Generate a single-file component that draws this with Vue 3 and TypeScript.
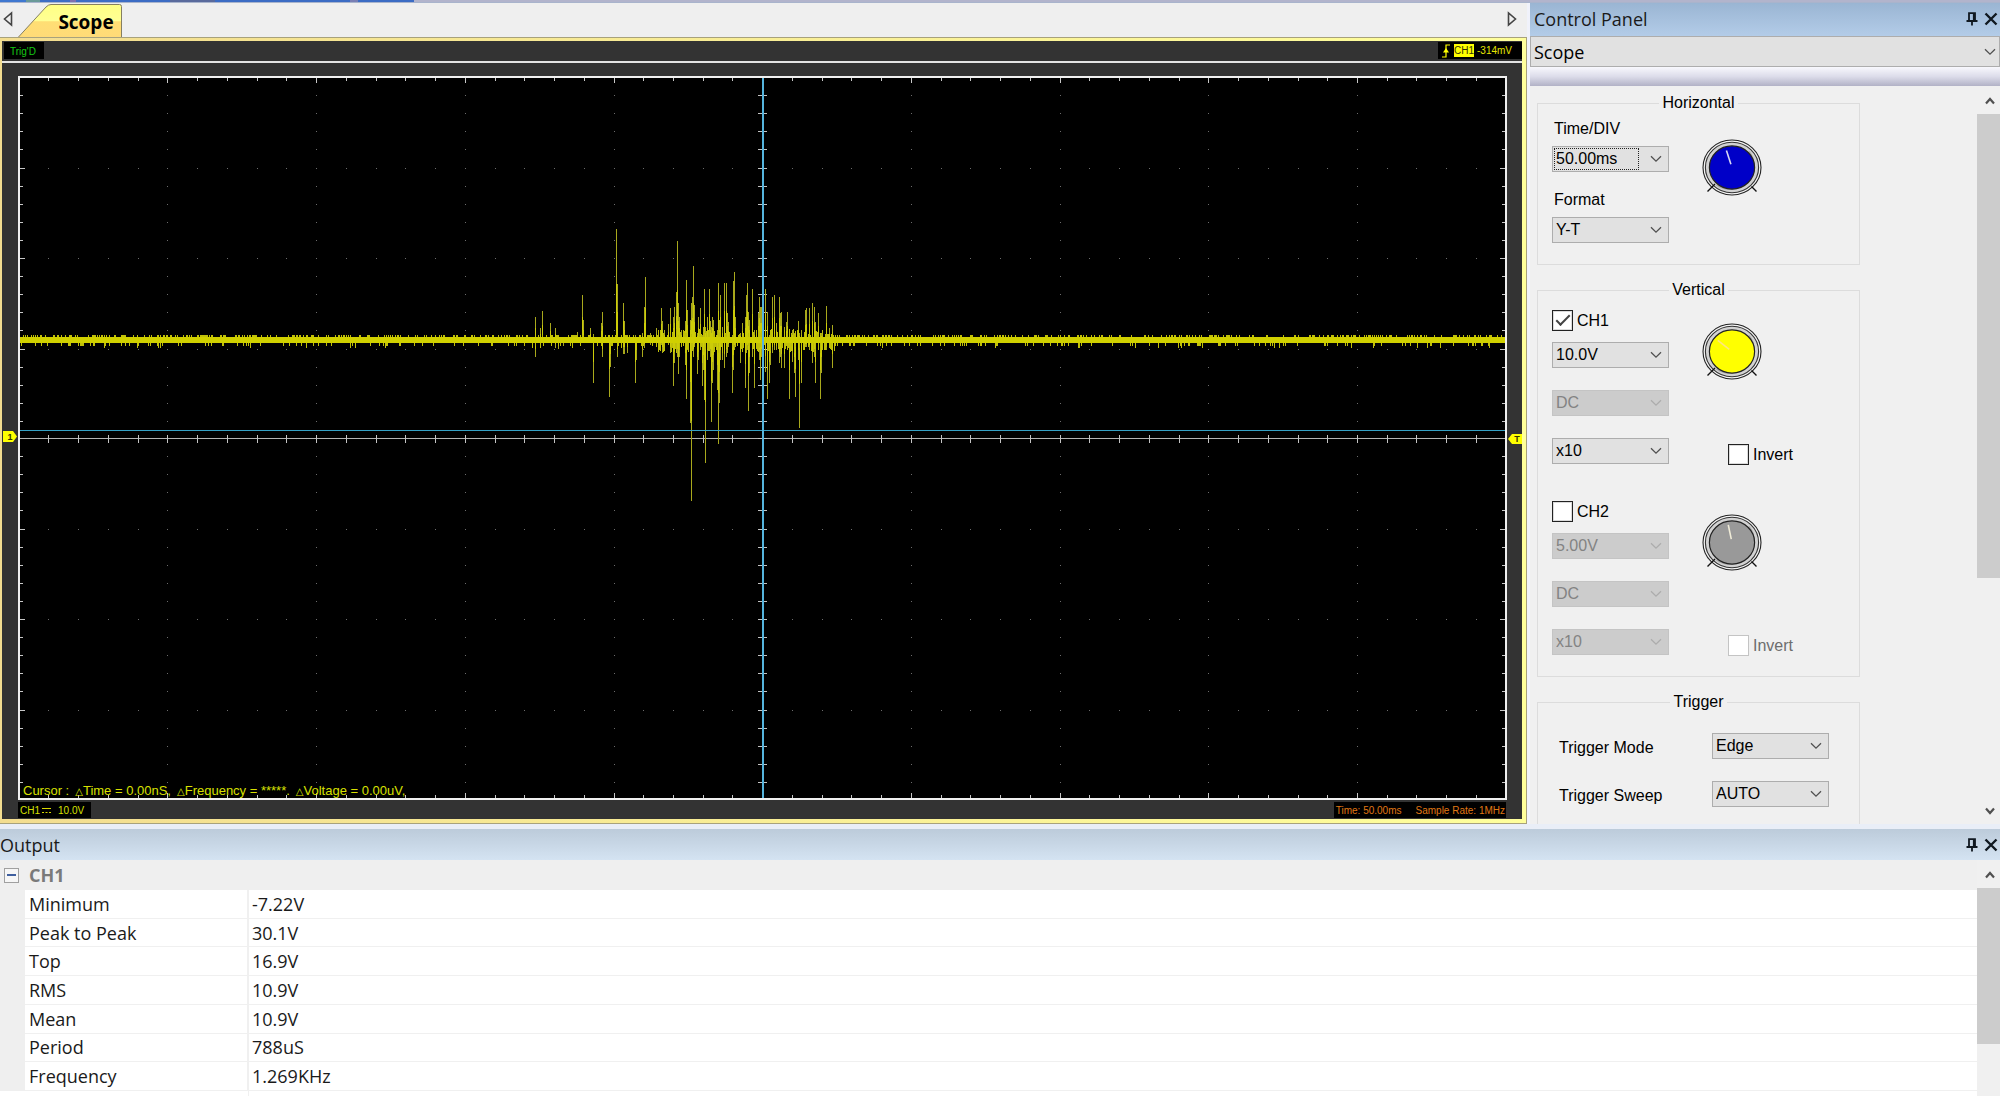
<script setup lang="ts">
import { h, ref } from 'vue'
import type { FunctionalComponent } from 'vue'

interface Channel {
  name: string
  enabled: boolean
  locked: boolean[]
  scale: string
  coupling: string
  probe: string
  invert: boolean
  color: string
  pointer: string
  angle: number
}

const timeDiv = ref('50.00ms')
const format = ref('Y-T')
const source = ref('Scope')

const channels = ref<Channel[]>([
  { name: 'CH1', enabled: true, locked: [false, true, false], scale: '10.0V', coupling: 'DC', probe: 'x10', invert: false, color: '#ffff00', pointer: '#ffe680', angle: -52 },
  { name: 'CH2', enabled: false, locked: [true, true, true], scale: '5.00V', coupling: 'DC', probe: 'x10', invert: false, color: '#999999', pointer: '#f0ecd8', angle: -12 },
])

const triggers = ref([
  { id: 'trigger-mode', label: 'Trigger Mode', value: 'Edge' },
  { id: 'trigger-sweep', label: 'Trigger Sweep', value: 'AUTO' },
])

const measurements = [
  ['Minimum', '-7.22V'],
  ['Peak to Peak', '30.1V'],
  ['Top', '16.9V'],
  ['RMS', '10.9V'],
  ['Mean', '10.9V'],
  ['Period', '788uS'],
  ['Frequency', '1.269KHz'],
]

const Chevron: FunctionalComponent = () =>
  h('svg', { width: 12, height: 8, viewBox: '0 0 12 8', 'aria-hidden': 'true' }, [
    h('path', { d: 'M1 1.2 6 6.2 11 1.2', fill: 'none', stroke: 'currentColor', 'stroke-width': 1.3 }),
  ])

const ScrollArrow: FunctionalComponent<{ down?: boolean }> = (props) =>
  h('svg', { width: 10, height: 8, viewBox: '0 0 10 8', 'aria-hidden': 'true' }, [
    h('path', { d: props.down ? 'M1 1.5 5 6 9 1.5' : 'M1 6.5 5 2 9 6.5', fill: 'none', stroke: '#505050', 'stroke-width': 2.2 }),
  ])
ScrollArrow.props = { down: Boolean }

const PinIcon: FunctionalComponent = () =>
  h('svg', { width: 12, height: 14, viewBox: '0 0 12 14', 'aria-hidden': 'true' }, [
    h('path', { d: 'M3 8.500V1.200h6v7.300M.5 9h11M6 9v4.500M7.800 1v8', fill: 'none', stroke: '#101820', 'stroke-width': 1.8 }),
  ])

const CloseIcon: FunctionalComponent = () =>
  h('svg', { width: 14, height: 14, viewBox: '0 0 14 14', 'aria-hidden': 'true' }, [
    h('path', { d: 'M1.5 1.5 12.5 12.5M12.5 1.5 1.5 12.5', fill: 'none', stroke: '#101820', 'stroke-width': 2.4 }),
  ])

const Knob: FunctionalComponent<{ color: string; pointer: string; angle: number }> = (props) =>
  h('svg', { width: 60, height: 60, viewBox: '0 0 60 60', 'aria-hidden': 'true' }, [
    h('ellipse', { cx: 30, cy: 29.5, rx: 29, ry: 27.5, fill: '#f4f4f4', stroke: '#222', 'stroke-width': 1.1 }),
    h('ellipse', { cx: 30, cy: 29.5, rx: 26.6, ry: 25.2, fill: '#d2d2d2', stroke: '#333', 'stroke-width': 1.1 }),
    h('path', { d: 'M47.5 13A24.6 24 0 0 1 14 47.5L18 43A20 20 0 0 0 43 18Z', fill: '#aaaaaa' }),
    h('ellipse', { cx: 30, cy: 29.5, rx: 22.6, ry: 21.6, fill: props.color, stroke: '#222', 'stroke-width': 1.2 }),
    h('path', { d: 'M13 46 5.5 53.5M49.5 48.5 54.5 53.5', stroke: '#111', 'stroke-width': 1.4 }),
    h('path', { d: 'M30 26V11.5', stroke: props.pointer, 'stroke-width': 1.6, transform: `rotate(${props.angle} 30 29.5)` }),
  ])
Knob.props = ['color', 'pointer', 'angle']

/* Graticule: ten divisions by eight, five steps in each */
const W = 1485
const H = 721
const gx = (i: number) => Math.round(-1.3 + i * 29.74)
const gy = (i: number) => Math.round(-1 + i * 18.1)

let dots = ''
let edges = ''
let axes = ''
for (let i = 1; i < 50; i++) {
  const x = gx(i)
  const len = i % 5 ? 3 : 5
  edges += `M${x} 0h1v${len}h-1zM${x} ${H - len}h1v${len}h-1z`
  axes += `M${x} 357h1v9h-1z`
  for (let j = 1; j < 8; j++) if (j !== 4) dots += `M${x} ${gy(j * 5)}h1v1h-1z`
}
for (let j = 1; j < 40; j++) {
  const y = gy(j)
  const len = j % 5 ? 3 : 5
  edges += `M0 ${y}v1h${len}v-1zM${W - len} ${y}v1h${len}v-1z`
  axes += `M738 ${y}v1h9v-1z`
  for (let i = 1; i < 10; i++) if (i !== 5) dots += `M${gx(i * 5)} ${y}h1v1h-1z`
}

/* Burst samples: position, rise above and fall below the base line, in thirds of a pixel */
const burst = [
  47, 68, 52, 60, 35, 0, 68, 87, 0, 91, 52, 10, 107, 35, 25, 116, 12, 28, 130, 10, 18, 172, 25, 10, 187, 135, 0, 190, 60, 10,
  211, 35, 10, 220, 18, 128, 243, 50, 10, 247, 85, 52, 269, 15, 172, 271, 10, 80, 288, 332, 10, 291, 168, 52, 311, 110, 42,
  314, 58, 42, 323, 15, 40, 347, 15, 128, 350, 8, 60, 368, 20, 52, 373, 98, 25, 376, 188, 10, 390, 22, 15, 409, 35, 12,
  424, 95, 15, 428, 58, 40, 432, 30, 30, 446, 48, 15, 452, 95, 38, 460, 70, 138, 463, 100, 70, 469, 145, 30, 472, 298, 50,
  475, 110, 102, 478, 70, 50, 483, 30, 15, 495, 58, 75, 499, 180, 178, 502, 90, 30, 512, 60, 248, 515, 110, 486,
  518, 128, 20, 521, 222, 50, 524, 105, 20, 533, 20, 102, 536, 68, 60, 541, 95, 30, 547, 15, 138, 551, 40, 90, 554, 152, 180,
  557, 40, 372, 562, 68, 60, 567, 152, 30, 570, 58, 50, 574, 40, 246, 577, 68, 130, 580, 60, 90, 592, 30, 150, 595, 172, 315,
  598, 60, 188, 602, 135, 60, 606, 40, 60, 614, 170, 85, 618, 172, 50, 621, 80, 40, 625, 55, 20, 636, 15, 160, 639, 50, 70,
  641, 178, 90, 644, 204, 30, 647, 68, 20, 662, 20, 68, 668, 52, 30, 676, 70, 145, 680, 135, 40, 683, 170, 30, 686, 85, 214,
  689, 60, 100, 696, 152, 50, 703, 30, 145, 715, 80, 20, 719, 128, 60, 722, 100, 120, 725, 100, 50, 731, 60, 60, 737, 152, 95,
  743, 85, 178, 748, 15, 128, 752, 15, 75, 757, 128, 40, 763, 135, 30, 768, 50, 30, 777, 128, 68, 781, 80, 50, 785, 85, 85,
  793, 38, 85, 798, 55, 15, 803, 85, 20, 808, 30, 178, 818, 30, 65, 822, 20, 100, 825, 20, 172, 836, 58, 60, 838, 20, 264,
  843, 30, 128, 857, 90, 20, 860, 95, 20, 868, 95, 30, 878, 110, 68, 884, 100, 50, 887, 55, 128, 896, 82, 30, 902, 20, 178,
  905, 20, 98, 918, 102, 30, 929, 35, 10, 937, 45, 85,
]
let spikes = ''
let cores = ''
for (let i = 0; i < burst.length; i += 3) {
  const x = 500 + Math.floor(burst[i] / 3)
  const rise = Math.round(burst[i + 1] / 3)
  const fall = Math.round(burst[i + 2] / 3)
  spikes += `M${x} ${262 - rise}h1V${262 + fall}h-1z`
  cores += `M${x} ${262 - Math.round(rise * 0.5)}h1V${262 + Math.round(fall * 0.5)}h-1z`
}

/* Base-line noise, thicker while the burst lasts */
let noise = ''
let seed = 7
const rand = () => {
  seed = (seed * 16807) % 2147483647
  return seed / 2147483647
}
for (let x = 1; x < W; x++) {
  const busy = x > 635 && x < 815
  const up = rand()
  const down = rand()
  if (busy) {
    if (up > 0.5) noise += `M${x} ${258 - Math.round((up - 0.5) * 14)}h1V262h-1z`
    if (down > 0.5) noise += `M${x} 262h1v${5 + Math.round((down - 0.5) * 16)}h-1z`
  } else {
    if (up > 0.7) noise += `M${x} 257h1v5h-1z`
    if (down > 0.84) noise += `M${x} 262h1v${down > 0.97 ? 8 : 6}h-1z`
  }
}
</script>

<template>
  <div class="app">
    <div class="strip"></div>

    <main class="scope">
      <div class="tabs">
        <button class="nav" type="button" aria-label="Previous tab">
          <svg width="10" height="16" viewBox="0 0 10 16"><path d="M8.5 2v12L1.5 8z" fill="none" stroke="#444" stroke-width="1.6" /></svg>
        </button>
        <button class="tab" type="button">
          <svg class="tab-shape" width="104" height="34" viewBox="0 0 104 34" aria-hidden="true">
            <defs>
              <linearGradient id="tab-fill" x1="0" y1="0" x2="0" y2="1">
                <stop offset="0" stop-color="#ffff84" />
                <stop offset=".5" stop-color="#ffff94" />
                <stop offset=".53" stop-color="#ffde74" />
                <stop offset="1" stop-color="#ffdb78" />
              </linearGradient>
            </defs>
            <path d="M.5 34 28 4Q30.500 1.500 33 1.500H101.500Q103.500 1.500 103.500 3.500V34" fill="url(#tab-fill)" stroke="#857f60" />
          </svg>
          <span class="tab-label">Scope</span>
        </button>
        <button class="nav nav-right" type="button" aria-label="Next tab">
          <svg width="10" height="16" viewBox="0 0 10 16"><path d="M1.500 2v12L8.500 8z" fill="none" stroke="#444" stroke-width="1.600" /></svg>
        </button>
      </div>

      <div class="frame">
        <div class="screen">
          <div class="status">
            <span class="trig">Trig'D</span>
            <span class="trigger-info">
              <svg width="10" height="14" viewBox="0 0 10 14" aria-hidden="true">
                <path d="M1 13h4V1h4" fill="none" stroke="#ffff00" stroke-width="1.200" />
                <path d="M5 4 8 8.500H2z" fill="#ffff00" />
              </svg>
              <b>CH1</b>
              <span>-314mV</span>
            </span>
          </div>

          <div class="plot-row">
            <svg class="marker marker-left" width="14" height="11" viewBox="0 0 14 11" aria-hidden="true">
              <path d="M0 0h10l4 5.500L10 11H0z" fill="#ffff00" />
              <text x="7" y="9">1</text>
            </svg>
            <div class="plot">
              <svg class="trace" :viewBox="`0 0 ${W} ${H}`" preserveAspectRatio="none" shape-rendering="crispEdges" aria-hidden="true">
                <path :d="dots" fill="#6c6c6c" />
                <path :d="edges" fill="#c8c8c8" />
                <rect x="0" y="361" :width="W" height="1" fill="#b4b4b4" />
                <path :d="axes" fill="#c4c4c4" />
                <path :d="spikes" fill="#a8a81c" />
                <path :d="cores" fill="#cccc08" />
                <path :d="noise" fill="#c0c008" />
                <rect x="0" y="259" :width="W" height="6" fill="#d0d000" />
                <rect x="0" y="352" :width="W" height="1" fill="#35a0c4" />
                <rect x="742" y="0" width="2" :height="H" fill="#55b4dc" />
              </svg>
              <p class="cursor">
                <span>Cursor :</span>
                <span><i>△</i>Time = 0.00nS,</span>
                <span><i>△</i>Frequency = *****.</span>
                <span><i>△</i>Voltage = 0.00uV,</span>
              </p>
            </div>
            <svg class="marker marker-right" width="14" height="10" viewBox="0 0 14 10" aria-hidden="true">
              <path d="M14 0H4L0 5l4 5h10z" fill="#ffff00" />
              <text x="9" y="8">T</text>
            </svg>
          </div>

          <div class="footer">
            <span class="channel-info">
              <span>CH1</span>
              <svg width="9" height="5" viewBox="0 0 9 5" aria-hidden="true"><path d="M0 .5h9M0 4.500h2m1.500 0h2m1.500 0h2" stroke="#d8d800" /></svg>
              <span class="volts">10.0V</span>
            </span>
            <span class="time-info"><span>Time: 50.00ms</span><span>Sample Rate: 1MHz</span></span>
          </div>
        </div>
      </div>
    </main>

    <aside class="panel">
      <header class="pane-title">
        <h2>Control Panel</h2>
        <button type="button" aria-label="Pin"><PinIcon /></button>
        <button type="button" aria-label="Close"><CloseIcon /></button>
      </header>
      <div class="combo source">
        <select v-model="source" aria-label="Instrument"><option>Scope</option></select>
        <Chevron />
      </div>
      <div class="band"></div>
      <div class="panel-body">
        <div class="groups">
          <fieldset class="group horizontal">
            <legend>Horizontal</legend>
            <div class="columns">
              <div class="fields">
                <label for="time-div">Time/DIV</label>
                <div class="combo focused">
                  <select id="time-div" v-model="timeDiv"><option>50.00ms</option></select>
                  <Chevron />
                </div>
                <label class="next" for="format">Format</label>
                <div class="combo">
                  <select id="format" v-model="format"><option>Y-T</option></select>
                  <Chevron />
                </div>
              </div>
              <div class="dial"><Knob color="#0000c8" pointer="#d8d8f4" :angle="-18" /></div>
            </div>
          </fieldset>

          <fieldset class="group vertical">
            <legend>Vertical</legend>
            <div v-for="ch in channels" :key="ch.name" class="channel">
              <div class="channel-fields">
                <label class="check"><input v-model="ch.enabled" type="checkbox" /><span>{{ ch.name }}</span></label>
                <div class="combo">
                  <select v-model="ch.scale" :disabled="ch.locked[0]" :aria-label="ch.name + ' scale'"><option>{{ ch.scale }}</option></select>
                  <Chevron />
                </div>
                <div class="combo">
                  <select v-model="ch.coupling" :disabled="ch.locked[1]" :aria-label="ch.name + ' coupling'"><option>{{ ch.coupling }}</option></select>
                  <Chevron />
                </div>
                <div class="combo">
                  <select v-model="ch.probe" :disabled="ch.locked[2]" :aria-label="ch.name + ' probe'"><option>{{ ch.probe }}</option></select>
                  <Chevron />
                </div>
              </div>
              <div class="channel-side">
                <Knob :color="ch.color" :pointer="ch.pointer" :angle="ch.angle" />
                <label class="check invert"><input v-model="ch.invert" type="checkbox" :disabled="!ch.enabled" /><span>Invert</span></label>
              </div>
            </div>
          </fieldset>

          <fieldset class="group trigger">
            <legend>Trigger</legend>
            <div v-for="t in triggers" :key="t.id" class="trigger-row">
              <label :for="t.id">{{ t.label }}</label>
              <div class="combo">
                <select :id="t.id" v-model="t.value"><option>{{ t.value }}</option></select>
                <Chevron />
              </div>
            </div>
          </fieldset>
        </div>
        <div class="scrollbar">
          <button type="button" aria-label="Scroll up"><ScrollArrow /></button>
          <div class="track"><div class="thumb panel-thumb"></div></div>
          <button type="button" aria-label="Scroll down"><ScrollArrow down /></button>
        </div>
      </div>
    </aside>

    <section class="output">
      <header class="pane-title pale">
        <h2>Output</h2>
        <button type="button" aria-label="Pin"><PinIcon /></button>
        <button type="button" aria-label="Close"><CloseIcon /></button>
      </header>
      <div class="output-body">
        <div class="list">
          <div class="category">
            <button class="toggle" type="button" aria-label="Collapse CH1"></button>
            <h3>CH1</h3>
          </div>
          <table>
            <tbody>
              <tr v-for="[name, value] in measurements" :key="name">
                <th scope="row">{{ name }}</th>
                <td>{{ value }}</td>
              </tr>
            </tbody>
          </table>
        </div>
        <div class="scrollbar">
          <button type="button" aria-label="Scroll up"><ScrollArrow /></button>
          <div class="track"><div class="thumb output-thumb"></div></div>
        </div>
      </div>
    </section>
  </div>
</template>

<style>
body {
  margin: 0;
  overflow: hidden;
}
</style>

<style scoped>
.app {
  display: grid;
  grid-template-columns: minmax(0, 1fr) 470px;
  grid-template-rows: 3px minmax(0, 1fr) auto;
  height: 100vh;
  background: #f0f2fb;
  color: #1a1a1a;
  font-family: "Open Sans", "Noto Sans", sans-serif;
  font-size: 18px;
}
.app *,
.app *::before {
  box-sizing: border-box;
}
button {
  display: flex;
  align-items: center;
  justify-content: center;
  padding: 0;
  border: 0;
  background: none;
  font: inherit;
  color: inherit;
}
h2,
h3,
p {
  margin: 0;
  font-size: inherit;
}
.strip {
  grid-column: 1 / -1;
  border-bottom: 1px solid #a9b4cc;
  background: linear-gradient(to right, #3f78d0 0 26px, #6a9a98 26px 40px, #3c6cc4 40px 70px, #7f6fae 70px 76px, #3c6cc4 76px 170px, #5a6a9c 170px 215px, #3c6cc4 215px 350px, #7a7fb4 350px 358px, #3c6cc4 358px 414px, #b2b4cc 414px);
}

/* Scope document */
.scope {
  display: flex;
  flex-direction: column;
  min-height: 0;
  margin-right: 3px;
}
.tabs {
  display: flex;
  height: 34px;
  background: #efefef;
}
.nav {
  width: 16px;
  padding-bottom: 2px;
}
.nav-right {
  width: 30px;
  margin-left: auto;
}
.tab {
  position: relative;
  width: 104px;
  margin-left: 2px;
}
.tab-shape {
  position: absolute;
  inset: 0;
}
.tab-label {
  position: relative;
  padding-left: 32px;
  font-size: 19px;
  line-height: 24px;
  padding-top: 3px;
  color: #000;
  font-weight: 700;
}
.frame {
  flex: 1;
  min-height: 0;
  padding: 3px 4px 4px 2px;
  border: solid #a8a27c;
  border-width: 1px 1px 1px 0;
  background: linear-gradient(to right, #f3dd90, #ffff9c);
}
.screen {
  display: flex;
  flex-direction: column;
  height: 100%;
  background: #333;
  font-family: "Liberation Sans", Arial, sans-serif;
  font-size: 10px;
  line-height: 16px;
}
.status {
  display: flex;
  justify-content: space-between;
  height: 22px;
  padding: 1px 0 2px 2px;
  border-bottom: 2px solid #e4e4e4;
}
.trig {
  width: 40px;
  height: 17px;
  padding-left: 6px;
  background: #000;
  color: #14c814;
  line-height: 19px;
}
.trigger-info {
  display: flex;
  align-items: center;
  gap: 3px;
  height: 17px;
  padding: 0 10px 0 3px;
  background: #000;
  color: #e6e600;
}
.trigger-info b {
  background: #ffff00;
  color: #333300;
  font-weight: 400;
  line-height: 13px;
}
.plot-row {
  position: relative;
  display: flex;
  flex: 1;
  min-height: 0;
  padding: 13px 15px 0 16px;
}
.plot {
  position: relative;
  flex: 1;
  min-width: 0;
  border: 2px solid #f0f0f0;
  background: #000;
}
.trace {
  display: block;
  width: 100%;
  height: 100%;
}
.cursor {
  position: absolute;
  left: 3px;
  bottom: 0;
  display: flex;
  gap: 6px;
  color: #d8e000;
  font-size: 13px;
  line-height: 14px;
  white-space: nowrap;
}
.cursor i {
  font-family: "DejaVu Sans", sans-serif;
  font-size: 10px;
  line-height: 10px;
  font-style: normal;
}
.marker {
  position: absolute;
}
.marker-left {
  left: 1px;
  top: calc(50% - 1px);
}
.marker-right {
  right: 0;
  top: calc(50% + 2px);
}
.marker text {
  font-size: 9px;
  font-weight: 700;
  text-anchor: middle;
  fill: #333300;
}
.footer {
  display: flex;
  justify-content: space-between;
  padding: 2px 16px 1px 16px;
}
.channel-info,
.time-info {
  display: flex;
  align-items: center;
  height: 16px;
  padding-top: 1px;
  background: #000;
}
.channel-info {
  gap: 2px;
  padding-right: 7px;
  padding-left: 2px;
  color: #d8e000;
}
.volts {
  padding-left: 5px;
}
.time-info {
  gap: 14px;
  padding-right: 1px;
  padding-left: 2px;
  color: #e07814;
}

/* Pane titles */
.pane-title {
  display: flex;
  align-items: center;
  flex: none;
  gap: 6px;
  height: 33px;
  padding-right: 2px;
  padding-bottom: 2px;
  background: linear-gradient(#9ab5d3, #b3cce8);
}
.pane-title h2 {
  flex: 1;
  padding-left: 4px;
  font-weight: 400;
  line-height: 30px;
}
.pane-title.pale {
  height: 31px;
  padding-bottom: 0;
  background: linear-gradient(#bccbda, #d4e3f2);
}
.pane-title.pale h2 {
  padding-left: 0;
}

/* Drop-downs and tick boxes */
.combo {
  position: relative;
  width: 117px;
  height: 26px;
  color: #000;
}
.combo select {
  appearance: none;
  width: 100%;
  height: 100%;
  margin: 0;
  padding: 0 24px 0 3px;
  border: 1px solid #adadad;
  border-radius: 0;
  background: #e1e1e1;
  color: inherit;
  font: inherit;
  outline: 0;
}
.combo select:disabled {
  border-color: #c4c4c4;
  background: #cccccc;
  color: #838383;
  opacity: 1;
}
.combo svg {
  position: absolute;
  right: 7px;
  top: 9px;
  color: #505050;
  pointer-events: none;
}
.combo select:disabled + svg {
  color: #adadad;
}
.combo.focused::before {
  content: "";
  position: absolute;
  inset: 2px 30px 2px 2px;
  border: 1px dotted #222;
  pointer-events: none;
}
.source {
  flex: none;
  width: 100%;
  height: 31px;
}
.source svg {
  right: 4px;
  top: 12px;
}
.check {
  display: flex;
  align-items: center;
  gap: 4px;
  height: 21px;
}
.check input {
  appearance: none;
  display: grid;
  place-items: center;
  width: 21px;
  height: 21px;
  margin: 0;
  border: 1px solid #222;
  outline: 1px solid #77777744;
  outline-offset: -2px;
  background: #fff;
}
.check input:checked::before {
  content: "";
  width: 14px;
  height: 7px;
  margin-bottom: 4px;
  border: solid #444;
  border-width: 0 0 2px 2px;
  transform: rotate(-45deg);
}
.check input:disabled {
  border-color: #c4c4c4;
  outline: 0;
}
.check input:disabled + span {
  color: #6d6d6d;
}

/* Control panel */
.panel {
  display: flex;
  flex-direction: column;
  min-height: 0;
}
.band {
  flex: none;
  height: 19px;
  background: linear-gradient(#f8f8fd, #dcdcea 50%, #b2b2c6);
}
.panel-body {
  display: flex;
  flex: 1;
  min-height: 0;
  background: #f0f0f0;
  color: #000;
  font-family: "Liberation Sans", Arial, sans-serif;
  font-size: 16px;
  line-height: 18px;
}
.groups {
  display: flex;
  flex: 1;
  flex-direction: column;
  gap: 16px;
  overflow: hidden;
  padding: 8px 7px 0;
}
.group {
  flex: none;
  width: 323px;
  min-width: 0;
  margin: 0;
  padding: 0 14px;
  border: 1px solid #dcdcdc;
}
.group legend {
  margin: 0 auto;
  padding: 0 3px;
}
.horizontal {
  padding-top: 8px;
  padding-bottom: 21px;
}
.columns,
.channel {
  display: flex;
  gap: 33px;
}
.fields {
  display: flex;
  flex-direction: column;
  gap: 8px;
}
.fields label {
  padding-left: 2px;
}
.fields .next {
  margin-top: 11px;
}
.dial {
  padding-top: 18px;
}
.vertical {
  display: flex;
  flex-direction: column;
  padding-top: 11px;
  padding-bottom: 20px;
}
.channel + .channel {
  margin-top: 36px;
}
.channel-fields {
  display: flex;
  flex-direction: column;
  gap: 22px;
}
.channel-fields .check {
  margin-bottom: -11px;
}
.channel-side {
  display: flex;
  flex-direction: column;
  gap: 62px;
  padding-top: 12px;
}
.channel-side svg {
  flex: none;
}
.invert {
  padding-left: 26px;
}
.trigger {
  padding-top: 22px;
  padding-bottom: 80px;
}
.trigger-row {
  display: flex;
  align-items: center;
}
.trigger-row + .trigger-row {
  margin-top: 22px;
}
.trigger-row label {
  width: 160px;
  padding: 3px 0 0 7px;
}

/* Scroll bars */
.scrollbar {
  display: flex;
  flex: none;
  flex-direction: column;
  width: 23px;
  background: #f0f0f0;
}
.scrollbar button {
  height: 28px;
  padding-top: 2px;
  padding-left: 2px;
}
.track {
  flex: 1;
  min-height: 0;
}
.thumb {
  background: #cccccc;
}
.panel-thumb {
  height: 68%;
}
.output-thumb {
  height: 75%;
}

/* Output list */
.output {
  grid-column: 1 / -1;
  border-top: 5px solid #e9eef7;
}
.output-body {
  display: flex;
}
.list {
  flex: 1;
  padding-bottom: 5px;
  background: linear-gradient(to right, #fff 248px, #f0f0f0 248px 249px, #fff 249px);
}
.category {
  display: flex;
  align-items: center;
  gap: 10px;
  height: 30px;
  padding-left: 4px;
  background: #efefef;
}
.category h3 {
  color: #7a7a7a;
  line-height: 30px;
}
.toggle {
  width: 15px;
  height: 15px;
  border: 1px solid #a0a0a0;
  background: linear-gradient(#3f5f9f, #3f5f9f) center / 9px 2px no-repeat #f6f6f6;
}
table {
  width: 100%;
  height: 201px;
  border-collapse: collapse;
  border-left: 25px solid #efefef;
  line-height: 24px;
}
th,
td {
  padding: 0 4px;
  border-bottom: 1px solid #f0f0f0;
  font-weight: 400;
  text-align: left;
}
th {
  width: 235px;
  border-right: 1px solid #f0f0f0;
}
</style>
